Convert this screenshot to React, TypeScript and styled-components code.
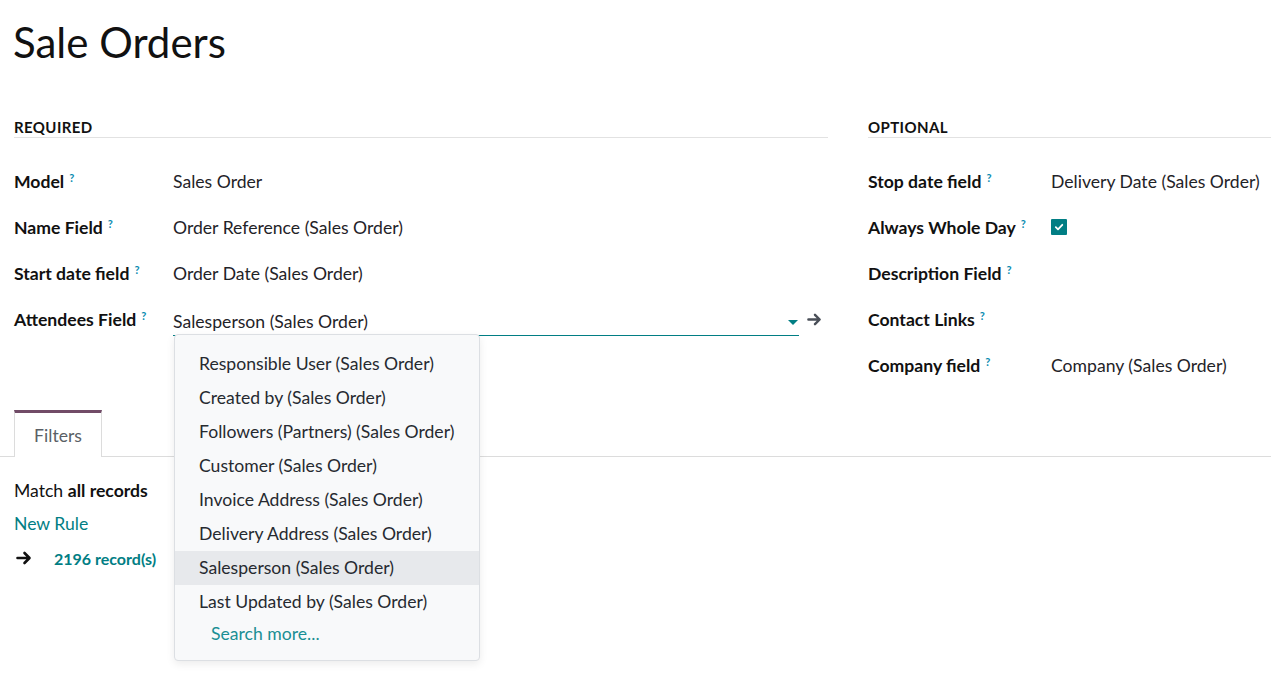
import React from 'react';
import styled, { createGlobalStyle } from 'styled-components';

const GlobalStyle = createGlobalStyle`
  body {
    margin: 0;
    background: #ffffff;
    font-family: Lato, "Noto Sans", sans-serif;
    color: #1f2328;
  }
`;

const teal = '#017e84';

const Page = styled.div`
  width: 1271px;
  height: 676px;
  overflow: hidden;
  position: relative;
`;

const Title = styled.h1`
  margin: 0;
  padding: 18px 0 0 13px;
  height: 48px;
  font-size: 42px;
  font-weight: 400;
  line-height: 48px;
  color: #111111;
`;

const Columns = styled.div`
  display: grid;
  grid-template-columns: 814px 1fr;
  column-gap: 40px;
  padding: 52px 0 0 14px;
`;

const Section = styled.div`
  display: flex;
  flex-direction: column;
`;

const SectionTitle = styled.div`
  font-size: 15px;
  font-weight: 700;
  letter-spacing: 0.4px;
  text-transform: uppercase;
  color: #111111;
  height: 18px;
  line-height: 18px;
  padding-bottom: 1px;
  border-bottom: 1px solid #e2e2e2;
  margin-bottom: 20px;
`;

const FieldRow = styled.div<{ $label: number }>`
  display: grid;
  grid-template-columns: ${(p) => p.$label}px 1fr;
  align-items: center;
  height: 46px;
`;

const Label = styled.div`
  font-size: 17.6px;
  font-weight: 700;
  color: #111111;
  white-space: nowrap;
`;

const Help = styled.sup`
  color: #0a8bb0;
  font-size: 11px;
  font-weight: 700;
  margin-left: 5px;
  vertical-align: 6px;
`;

const Value = styled.div`
  font-size: 17.6px;
  color: #1f2328;
  white-space: nowrap;
`;

const ManyField = styled.div`
  display: flex;
  align-items: center;
  gap: 8px;
  position: relative;
`;

const InputLine = styled.div`
  flex: 0 0 626px;
  display: flex;
  align-items: center;
  justify-content: space-between;
  height: 28px;
  border-bottom: 1px solid ${teal};
  font-size: 17.6px;
  color: #1f2328;
  padding-top: 5px;
`;

const Caret = styled.span`
  width: 0;
  height: 0;
  border-left: 5px solid transparent;
  border-right: 5px solid transparent;
  border-top: 5px solid ${teal};
  margin-right: 1px;
  margin-top: 2px;
`;

const Dropdown = styled.ul`
  position: absolute;
  top: 32px;
  left: 1px;
  width: 304px;
  margin: 0;
  padding: 12px 0 9px;
  list-style: none;
  background: #f8f9fa;
  border: 1px solid #dcdfe3;
  border-radius: 4px;
  box-shadow: 0 3px 8px rgba(0, 0, 0, 0.08);
  z-index: 5;
`;

const Option = styled.li<{ $active?: boolean }>`
  height: 34px;
  line-height: 34px;
  padding-left: 24px;
  font-size: 17.6px;
  color: #262a30;
  background: ${(p) => (p.$active ? '#e7e9ec' : 'transparent')};
  white-space: nowrap;
`;

const SearchMore = styled.li`
  height: 32px;
  line-height: 30px;
  padding-left: 36px;
  font-size: 17.6px;
  color: #1a8f94;
`;

const CheckBox = styled.span`
  width: 16px;
  height: 16px;
  border-radius: 1px;
  background: ${teal};
  display: flex;
  align-items: center;
  justify-content: center;
`;

const TabBar = styled.div`
  display: flex;
  padding: 22px 0 0 14px;
  border-bottom: 1px solid #dcdcdc;
`;

const Tab = styled.div`
  width: 88px;
  height: 47px;
  box-sizing: border-box;
  border: 1px solid #dcdcdc;
  border-top: 3px solid #714b67;
  border-bottom: none;
  margin-bottom: -1px;
  background: #ffffff;
  display: flex;
  align-items: center;
  justify-content: center;
  font-size: 17.6px;
  color: #5a5f66;
`;

const Domain = styled.div`
  padding: 17px 0 0 14px;
  display: flex;
  flex-direction: column;
`;

const Line = styled.div`
  height: 33px;
  line-height: 33px;
  font-size: 17.6px;
  color: #111111;
  b {
    font-weight: 700;
  }
`;

const Link = styled(Line)`
  color: ${teal};
`;

const Records = styled.div`
  display: flex;
  align-items: center;
  gap: 22px;
  height: 36px;
  padding-left: 2px;
  font-size: 16px;
  font-weight: 700;
  color: ${teal};
`;

function ArrowIcon({ color, size }: { color: string; size: number }) {
  return (
    <svg width={size} height={size} viewBox="0 0 16 16">
      <path
        d="M1.5 8 H13 M8.5 3 L13.5 8 L8.5 13"
        fill="none"
        stroke={color}
        strokeWidth="2.6"
        strokeLinecap="round"
        strokeLinejoin="round"
      />
    </svg>
  );
}

const requiredFields = [
  { label: 'Model', value: 'Sales Order' },
  { label: 'Name Field', value: 'Order Reference (Sales Order)' },
  { label: 'Start date field', value: 'Order Date (Sales Order)' },
];

const optionalFields = [
  { label: 'Stop date field', value: 'Delivery Date (Sales Order)' },
  { label: 'Always Whole Day', check: true },
  { label: 'Description Field' },
  { label: 'Contact Links' },
  { label: 'Company field', value: 'Company (Sales Order)' },
];

const options = [
  'Responsible User (Sales Order)',
  'Created by (Sales Order)',
  'Followers (Partners) (Sales Order)',
  'Customer (Sales Order)',
  'Invoice Address (Sales Order)',
  'Delivery Address (Sales Order)',
  'Salesperson (Sales Order)',
  'Last Updated by (Sales Order)',
];

export default function App() {
  return (
    <Page>
      <GlobalStyle />
      <Title>Sale Orders</Title>

      <Columns>
        <Section>
          <SectionTitle>Required</SectionTitle>
          {requiredFields.map((f) => (
            <FieldRow key={f.label} $label={159}>
              <Label>
                {f.label}
                <Help>?</Help>
              </Label>
              <Value>{f.value}</Value>
            </FieldRow>
          ))}
          <FieldRow $label={159}>
            <Label>
              Attendees Field
              <Help>?</Help>
            </Label>
            <ManyField>
              <InputLine>
                <span>Salesperson (Sales Order)</span>
                <Caret />
              </InputLine>
              <ArrowIcon color="#4a4f58" size={15} />
              <Dropdown>
                {options.map((o) => (
                  <Option key={o} $active={o.startsWith('Salesperson')}>
                    {o}
                  </Option>
                ))}
                <SearchMore>Search more...</SearchMore>
              </Dropdown>
            </ManyField>
          </FieldRow>
        </Section>

        <Section>
          <SectionTitle>Optional</SectionTitle>
          {optionalFields.map((f) => (
            <FieldRow key={f.label} $label={183}>
              <Label>
                {f.label}
                <Help>?</Help>
              </Label>
              {f.check ? (
                <CheckBox>
                  <svg width="10" height="10" viewBox="0 0 10 10">
                    <path
                      d="M1.8 5.2 L4 7.3 L8.3 2.8"
                      fill="none"
                      stroke="#ffffff"
                      strokeWidth="1.8"
                      strokeLinecap="round"
                      strokeLinejoin="round"
                    />
                  </svg>
                </CheckBox>
              ) : (
                <Value>{f.value}</Value>
              )}
            </FieldRow>
          ))}
        </Section>
      </Columns>

      <TabBar>
        <Tab>Filters</Tab>
      </TabBar>

      <Domain>
        <Line>
          Match <b>all records</b>
        </Line>
        <Link>New Rule</Link>
        <Records>
          <ArrowIcon color="#111111" size={16} />
          2196 record(s)
        </Records>
      </Domain>
    </Page>
  );
}
